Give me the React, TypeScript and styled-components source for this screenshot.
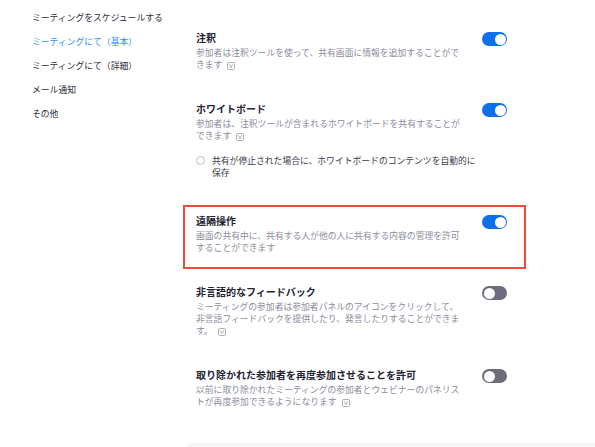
import React from "react";
import styled, { createGlobalStyle } from "styled-components";

const GlobalStyle = createGlobalStyle`
  html, body {
    margin: 0;
    padding: 0;
    background: #ffffff;
    overflow: hidden;
  }
  body {
    font-family: "Noto Sans CJK JP", "Noto Sans", sans-serif;
  }
`;

const Page = styled.div`
  display: flex;
  flex-direction: row;
  width: 595px;
  height: 447px;
  overflow: hidden;
`;

const Nav = styled.nav`
  width: 196px;
  flex: none;
  box-sizing: border-box;
  padding: 6px 0 0 32px;
  display: flex;
  flex-direction: column;
`;

const NavItem = styled.div<{ $active?: boolean }>`
  font-size: 8.8px;
  line-height: 24px;
  height: 24px;
  white-space: nowrap;
  color: ${(p) => (p.$active ? "#2d8cff" : "#2a2a36")};
`;

const Main = styled.main`
  flex: 1;
  display: flex;
  flex-direction: column;
  padding-top: 15px;
`;

const Section = styled.section<{ $highlight?: boolean }>`
  position: relative;
  width: 311px;
  padding: 14.5px 0 15px;
  display: flex;
  justify-content: space-between;
  align-items: flex-start;

  &::after {
    content: "";
    display: ${(p) => (p.$highlight ? "block" : "none")};
    position: absolute;
    top: 7px;
    bottom: 0;
    left: -13px;
    right: -19px;
    border: 2px solid #ef4a37;
    pointer-events: none;
  }
`;

const TextBlock = styled.div`
  width: 268px;
  display: flex;
  flex-direction: column;
`;

const Title = styled.div`
  font-size: 10px;
  font-weight: 700;
  line-height: 15px;
  color: #232333;
  white-space: nowrap;
`;

const Desc = styled.div`
  margin-top: 2.5px;
  font-size: 8.8px;
  line-height: 12px;
  color: #8b8b99;
  line-break: anywhere;
`;

const CheckRow = styled.label`
  display: flex;
  align-items: flex-start;
  gap: 7px;
  margin: 12.5px 0 4.5px;
  width: 290px;
`;

const CheckBox = styled.span`
  flex: none;
  width: 9px;
  height: 9px;
  margin-top: 1.5px;
  border: 1px solid #bdbdc8;
  border-radius: 50%;
  box-sizing: border-box;
  background: #fff;
`;

const CheckText = styled.span`
  width: 268px;
  font-size: 8.8px;
  line-height: 12px;
  color: #3a3a48;
  line-break: anywhere;
`;

const Toggle = styled.span<{ $on?: boolean }>`
  flex: none;
  position: relative;
  width: 25px;
  height: 14px;
  margin-top: 2.5px;
  border-radius: 7px;
  background: ${(p) => (p.$on ? "#0e71eb" : "#6c6c7c")};

  &::before {
    content: "";
    position: absolute;
    top: 1.5px;
    left: ${(p) => (p.$on ? "12.5px" : "1.5px")};
    width: 11px;
    height: 11px;
    border-radius: 50%;
    background: #ffffff;
  }
`;

const IconWrap = styled.span`
  display: inline-block;
  margin-left: 5px;
  vertical-align: -2px;
  line-height: 0;
`;

const BottomBand = styled.div`
  flex: 1;
  margin-top: 20px;
  margin-left: -8px;
  background: #f4f4f7;
  border-top-left-radius: 3px;
`;

const InfoIcon = () => (
  <IconWrap>
    <svg width="8" height="8" viewBox="0 0 8 8">
      <rect x="0.5" y="0.5" width="7" height="7" rx="1" fill="none" stroke="#9a9aa6" strokeWidth="0.8" />
      <path d="M2.2 2.3 L4 5.7 L5.8 2.3" fill="none" stroke="#9a9aa6" strokeWidth="0.8" />
    </svg>
  </IconWrap>
);

const navItems = [
  { label: "ミーティングをスケジュールする", active: false },
  { label: "ミーティングにて（基本）", active: true },
  { label: "ミーティングにて（詳細）", active: false },
  { label: "メール通知", active: false },
  { label: "その他", active: false },
];

export default function App() {
  return (
    <>
      <GlobalStyle />
      <Page>
        <Nav>
          {navItems.map((n) => (
            <NavItem key={n.label} $active={n.active}>
              {n.label}
            </NavItem>
          ))}
        </Nav>
        <Main>
          <Section>
            <TextBlock>
              <Title>注釈</Title>
              <Desc>
                参加者は注釈ツールを使って、共有画面に情報を追加することができます
                <InfoIcon />
              </Desc>
            </TextBlock>
            <Toggle $on />
          </Section>
          <Section>
            <TextBlock>
              <Title>ホワイトボード</Title>
              <Desc>
                参加者は、注釈ツールが含まれるホワイトボードを共有することができます
                <InfoIcon />
              </Desc>
              <CheckRow>
                <CheckBox />
                <CheckText>共有が停止された場合に、ホワイトボードのコンテンツを自動的に保存</CheckText>
              </CheckRow>
            </TextBlock>
            <Toggle $on />
          </Section>
          <Section $highlight>
            <TextBlock>
              <Title>遠隔操作</Title>
              <Desc>画面の共有中に、共有する人が他の人に共有する内容の管理を許可することができます</Desc>
            </TextBlock>
            <Toggle $on />
          </Section>
          <Section>
            <TextBlock>
              <Title>非言語的なフィードバック</Title>
              <Desc>
                ミーティングの参加者は参加者パネルのアイコンをクリックして、非言語フィードバックを提供したり、発言したりすることができます。
                <InfoIcon />
              </Desc>
            </TextBlock>
            <Toggle />
          </Section>
          <Section>
            <TextBlock>
              <Title>取り除かれた参加者を再度参加させることを許可</Title>
              <Desc>
                以前に取り除かれたミーティングの参加者とウェビナーのパネリストが再度参加できるようになります
                <InfoIcon />
              </Desc>
            </TextBlock>
            <Toggle />
          </Section>
          <BottomBand />
        </Main>
      </Page>
    </>
  );
}
